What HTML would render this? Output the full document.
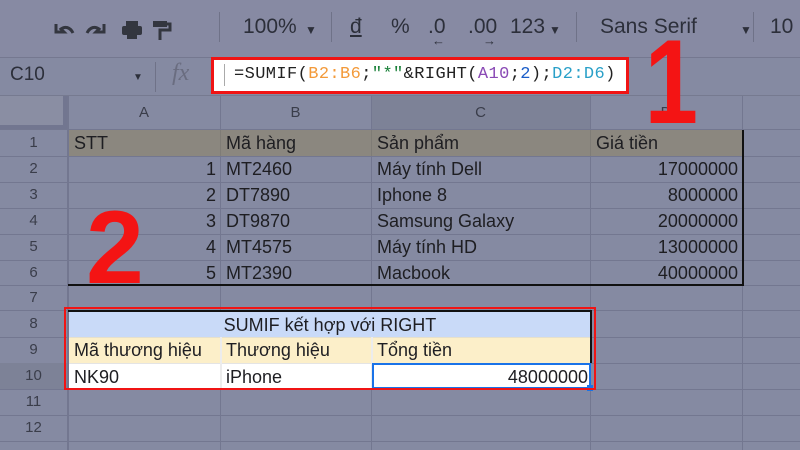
<!DOCTYPE html>
<html><head><meta charset="utf-8"><style>
*{margin:0;padding:0;box-sizing:border-box}
body{width:800px;height:450px;overflow:hidden;background:#858aa2;font-family:"Liberation Sans",sans-serif;position:relative;color:#222}
.a{position:absolute}
.t{position:absolute;font-size:18px;line-height:26px;white-space:nowrap;color:#1e1e22}
.r{text-align:right}
.hl{position:absolute;height:1px;background:#737790}
.vl{position:absolute;width:1px;background:#737790}
.rn{position:absolute;left:0;width:67px;text-align:center;font-size:15px;color:#3a3d4a;line-height:26px}
.tb{position:absolute;top:15px;font-size:21px;color:#2c2f3a}
</style></head><body>
<!-- toolbar -->
<div class="a" style="left:0;top:0;width:800px;height:57px;background:#878aa3"></div>
<svg class="a" style="left:50px;top:16px" width="130" height="28" viewBox="0 0 130 28">
<path d="M6 8 L6 16 L14 16 L11 13 C15 10 20 11 23 17" fill="none" stroke="#33363f" stroke-width="3"/>
<path d="M54 8 L54 16 L46 16 L49 13 C45 10 40 11 37 17" fill="none" stroke="#33363f" stroke-width="3"/>
<rect x="76" y="5" width="12" height="5" fill="#33363f"/><rect x="72" y="10" width="20" height="9" rx="2" fill="#33363f"/><rect x="77" y="16" width="10" height="7" fill="#33363f"/>
<rect x="103" y="5" width="14" height="6" fill="#33363f"/><path d="M117 8 H120 V14 H110 V24" fill="none" stroke="#33363f" stroke-width="3"/>
</svg>
<div class="vl" style="left:219px;top:12px;height:30px;background:#6f7288"></div>
<div class="tb" style="left:243px">100%</div>
<div class="tb" style="left:305px;font-size:12px;top:23px">▼</div>
<div class="vl" style="left:331px;top:12px;height:30px;background:#6f7288"></div>
<div class="tb" style="left:350px;text-decoration:underline">đ</div>
<div class="tb" style="left:391px">%</div>
<div class="tb" style="left:428px">.0</div>
<div class="tb" style="left:432px;top:33px;font-size:13px">←</div>
<div class="tb" style="left:468px">.00</div>
<div class="tb" style="left:483px;top:33px;font-size:13px">→</div>
<div class="tb" style="left:510px">123</div>
<div class="tb" style="left:549px;font-size:12px;top:23px">▼</div>
<div class="vl" style="left:576px;top:12px;height:30px;background:#6f7288"></div>
<div class="tb" style="left:600px">Sans Serif</div>
<div class="tb" style="left:740px;font-size:12px;top:23px">▼</div>
<div class="vl" style="left:753px;top:12px;height:30px;background:#6f7288"></div>
<div class="tb" style="left:770px">10</div>
<div class="hl" style="left:0;top:57px;width:800px;background:#757890"></div>
<!-- formula bar -->
<div class="tb" style="left:10px;top:64px;font-size:19px">C10</div>
<div class="tb" style="left:133px;top:72px;font-size:10px">▼</div>
<div class="vl" style="left:155px;top:62px;height:30px;background:#6f7288"></div>
<div class="tb" style="left:172px;top:60px;font-size:24px;font-style:italic;font-family:'Liberation Serif',serif;color:#6a6d80">fx</div>
<div class="a" style="left:211px;top:57px;width:418px;height:37px;border:3px solid #f01414;background:#fff"></div>
<div class="vl" style="left:224px;top:64px;height:22px;background:#aaa"></div>
<div class="a" style="left:234px;top:63px;font-family:'Liberation Mono',monospace;font-size:17px;letter-spacing:0.4px;line-height:24px;white-space:nowrap;color:#222">=SUMIF(<span style="color:#f39a3a">B2:B6</span>;<span style="color:#188038">"*"</span>&amp;RIGHT(<span style="color:#8a4ab5">A10</span>;<span style="color:#1a5dc8">2</span>);<span style="color:#2aa0c8">D2:D6</span>)</div>
<div class="hl" style="left:0;top:95px;width:800px;background:#767a90"></div>
<!-- column headers -->
<div class="a" style="left:0;top:96px;width:67px;height:33px;background:#8a8ea3"></div>
<div class="a" style="left:371px;top:96px;width:219px;height:33px;background:#7d8297"></div>
<div class="a" style="left:0;top:96px;width:67px;height:33px;border-right:4px solid #727690;border-bottom:4px solid #727690"></div>
<div class="t" style="left:68px;top:100px;width:152px;text-align:center;font-size:15px;color:#3a3d4a">A</div>
<div class="t" style="left:220px;top:100px;width:151px;text-align:center;font-size:15px;color:#3a3d4a">B</div>
<div class="t" style="left:371px;top:100px;width:219px;text-align:center;font-size:15px;color:#3a3d4a">C</div>
<div class="t" style="left:590px;top:100px;width:152px;text-align:center;font-size:15px;color:#3a3d4a">D</div>
<!-- grid lines -->
<div class="hl" style="left:0;top:129px;width:800px"></div>
<div class="hl" style="left:0;top:156px;width:800px"></div>
<div class="hl" style="left:0;top:182px;width:800px"></div>
<div class="hl" style="left:0;top:208px;width:800px"></div>
<div class="hl" style="left:0;top:234px;width:800px"></div>
<div class="hl" style="left:0;top:260px;width:800px"></div>
<div class="hl" style="left:0;top:285px;width:800px"></div>
<div class="hl" style="left:0;top:310px;width:800px"></div>
<div class="hl" style="left:0;top:337px;width:800px"></div>
<div class="hl" style="left:0;top:363px;width:800px"></div>
<div class="hl" style="left:0;top:389px;width:800px"></div>
<div class="hl" style="left:0;top:415px;width:800px"></div>
<div class="hl" style="left:0;top:441px;width:800px"></div>
<div class="vl" style="left:67px;top:96px;height:354px;width:2px"></div>
<div class="vl" style="left:220px;top:96px;height:354px"></div>
<div class="vl" style="left:371px;top:96px;height:354px"></div>
<div class="vl" style="left:590px;top:96px;height:354px"></div>
<div class="vl" style="left:742px;top:96px;height:354px"></div>
<!-- row 1 fill -->
<div class="a" style="left:69px;top:130px;width:673px;height:26px;background:#8b877f"></div>
<div class="vl" style="left:220px;top:130px;height:26px;background:#7f7c76"></div>
<div class="vl" style="left:371px;top:130px;height:26px;background:#7f7c76"></div>
<div class="vl" style="left:590px;top:130px;height:26px;background:#7f7c76"></div>
<!-- row 8-10 fills -->
<div class="a" style="left:69px;top:311px;width:522px;height:26px;background:#c9daf8"></div>
<div class="a" style="left:69px;top:337px;width:522px;height:26px;background:#fcefc9"></div>
<div class="a" style="left:69px;top:363px;width:522px;height:26px;background:#fff"></div>
<div class="a" style="left:69px;top:337px;width:522px;height:1px;background:#e6e0cc"></div>
<div class="a" style="left:69px;top:363px;width:522px;height:1px;background:#e4e4e4"></div>
<div class="a" style="left:220px;top:337px;width:2px;height:52px;background:#ececec"></div>
<div class="a" style="left:371px;top:337px;width:2px;height:52px;background:#ececec"></div>
<!-- black borders -->
<div class="a" style="left:742px;top:130px;width:2px;height:155px;background:#111"></div>
<div class="a" style="left:68px;top:284px;width:676px;height:2px;background:#111"></div>
<!-- row numbers -->
<div class="rn" style="top:130px">1</div><div class="rn" style="top:156px">2</div><div class="rn" style="top:182px">3</div>
<div class="rn" style="top:208px">4</div><div class="rn" style="top:234px">5</div><div class="rn" style="top:260px">6</div>
<div class="rn" style="top:285px">7</div><div class="rn" style="top:311px">8</div><div class="rn" style="top:337px">9</div>
<div class="rn" style="top:363px;background:#7d8297">10</div><div class="rn" style="top:389px">11</div><div class="rn" style="top:415px">12</div>
<!-- data -->
<div class="t" style="left:74px;top:130px">STT</div>
<div class="t" style="left:226px;top:130px">Mã hàng</div>
<div class="t" style="left:377px;top:130px">Sản phẩm</div>
<div class="t" style="left:596px;top:130px">Giá tiền</div>
<div class="t r" style="left:68px;width:148px;top:156px">1</div>
<div class="t r" style="left:68px;width:148px;top:182px">2</div>
<div class="t r" style="left:68px;width:148px;top:208px">3</div>
<div class="t r" style="left:68px;width:148px;top:234px">4</div>
<div class="t r" style="left:68px;width:148px;top:260px">5</div>
<div class="t" style="left:226px;top:156px">MT2460</div>
<div class="t" style="left:226px;top:182px">DT7890</div>
<div class="t" style="left:226px;top:208px">DT9870</div>
<div class="t" style="left:226px;top:234px">MT4575</div>
<div class="t" style="left:226px;top:260px">MT2390</div>
<div class="t" style="left:377px;top:156px">Máy tính Dell</div>
<div class="t" style="left:377px;top:182px">Iphone 8</div>
<div class="t" style="left:377px;top:208px">Samsung Galaxy</div>
<div class="t" style="left:377px;top:234px">Máy tính HD</div>
<div class="t" style="left:377px;top:260px">Macbook</div>
<div class="t r" style="left:590px;width:148px;top:156px">17000000</div>
<div class="t r" style="left:590px;width:148px;top:182px">8000000</div>
<div class="t r" style="left:590px;width:148px;top:208px">20000000</div>
<div class="t r" style="left:590px;width:148px;top:234px">13000000</div>
<div class="t r" style="left:590px;width:148px;top:260px">40000000</div>
<div class="t" style="left:68px;width:524px;top:312px;text-align:center">SUMIF kết hợp với RIGHT</div>
<div class="t" style="left:74px;top:337px">Mã thương hiệu</div>
<div class="t" style="left:226px;top:337px">Thương hiệu</div>
<div class="t" style="left:377px;top:337px">Tổng tiền</div>
<div class="t" style="left:74px;top:364px">NK90</div>
<div class="t" style="left:226px;top:364px">iPhone</div>
<div class="t r" style="left:372px;width:216px;top:364px">48000000</div>
<!-- section borders -->
<div class="a" style="left:68px;top:310px;width:524px;height:2px;background:#111"></div>
<div class="a" style="left:590px;top:310px;width:2px;height:53px;background:#111"></div>
<div class="a" style="left:372px;top:363px;width:219px;height:26px;border:2px solid #1a73e8"></div>
<div class="a" style="left:587px;top:385px;width:6px;height:6px;background:#1a73e8"></div>
<div class="a" style="left:64px;top:307px;width:532px;height:83px;border:2px solid #f01414"></div>
<!-- red numbers -->
<div class="a" style="left:638px;top:22px;font-size:120px;font-weight:bold;color:#f41414;line-height:1;transform:scaleX(0.8);font-family:'Liberation Sans',sans-serif">1</div>
<div class="a" style="left:86px;top:196px;font-size:104px;font-weight:bold;color:#f41414;line-height:1;font-family:'Liberation Sans',sans-serif">2</div>
</body></html>
